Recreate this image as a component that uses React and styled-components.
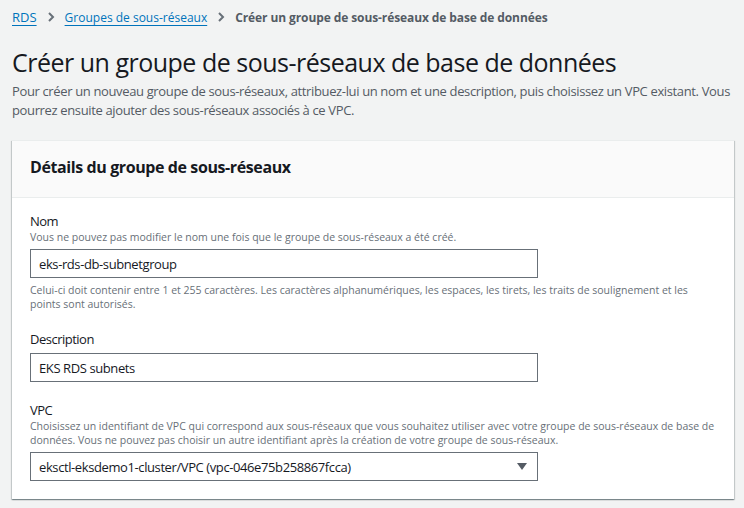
import React from "react";
import styled, { createGlobalStyle } from "styled-components";

const Global = createGlobalStyle`
  html, body { margin: 0; padding: 0; background: #f2f3f3; }
  body { font-family: "Open Sans", "Noto Sans", sans-serif; color: #16191f; }
  * { box-sizing: border-box; }
`;

const Page = styled.div`
  padding: 8px 11px 0 12px;
  width: 744px;
  height: 508px;
  overflow: hidden;
`;

const Crumbs = styled.nav`
  display: flex;
  align-items: center;
  gap: 8px;
  height: 18px;
  font-size: 12px;
`;

const CrumbLink = styled.a`
  color: #0073bb;
  text-decoration: underline;
  text-underline-offset: 3px;
  font-size: ${(p) => p.$size || 12}px;
`;

const CrumbCurrent = styled.span`
  color: #545b64;
  font-weight: 700;
  letter-spacing: -0.1px;
`;

const Chevron = styled.svg`
  width: 12px;
  height: 12px;
  flex: none;
`;

const Title = styled.h1`
  margin: 18px 0 0;
  font-size: 25px;
  font-weight: 400;
  line-height: 36px;
  color: #16191f;
  letter-spacing: -0.5px;
`;

const Lead = styled.p`
  margin: 2px 0 0;
  font-size: 13px;
  line-height: 19px;
  letter-spacing: -0.36px;
  color: #545b64;
  width: 720px;
`;

const Card = styled.section`
  margin-top: 20px;
  width: 722px;
  background: #fff;
  border-top: 1px solid #eaeded;
  box-shadow: 0 1px 1px 0 rgba(0, 28, 36, 0.3), 1px 1px 1px 0 rgba(0, 28, 36, 0.15), -1px 1px 1px 0 rgba(0, 28, 36, 0.15);
`;

const CardHeader = styled.header`
  background: #fafafa;
  border-bottom: 1px solid #eaeded;
  height: 57px;
  padding: 0 18px 4px;
  display: flex;
  align-items: center;
`;

const CardTitle = styled.h2`
  margin: 0;
  font-size: 16px;
  font-weight: 700;
  letter-spacing: -0.4px;
  color: #16191f;
`;

const CardBody = styled.div`
  padding: 14px 18px 18px;
  display: flex;
  flex-direction: column;
  gap: 19px;
`;

const Field = styled.div`
  display: flex;
  flex-direction: column;
`;

const Label = styled.label`
  font-size: 13px;
  line-height: 18px;
  letter-spacing: -0.5px;
  color: #16191f;
`;

const Hint = styled.div`
  font-size: 10.5px;
  line-height: 14px;
  color: #687078;
  margin-top: ${(p) => p.$top || 0}px;
  margin-bottom: ${(p) => p.$bottom || 0}px;
`;

const Input = styled.div`
  width: 508px;
  height: 29px;
  margin-top: ${(p) => p.$top || 0}px;
  border: 1px solid #687078;
  background: #fff;
  display: flex;
  align-items: center;
  padding: 0 8px;
  font-size: 13px;
  letter-spacing: -0.4px;
  color: #16191f;
  justify-content: space-between;
`;

const Caret = styled.svg`
  width: 10px;
  height: 8px;
  margin-right: 2px;
`;

const ChevronIcon = () => (
  <Chevron viewBox="0 0 12 12">
    <path d="M4 2l4 4-4 4" fill="none" stroke="#687078" strokeWidth="2" />
  </Chevron>
);

export default function App() {
  return (
    <Page>
      <Global />
      <Crumbs>
        <CrumbLink $size={13}>RDS</CrumbLink>
        <ChevronIcon />
        <CrumbLink>Groupes de sous-réseaux</CrumbLink>
        <ChevronIcon />
        <CrumbCurrent>Créer un groupe de sous-réseaux de base de données</CrumbCurrent>
      </Crumbs>
      <Title>Créer un groupe de sous-réseaux de base de données</Title>
      <Lead>
        Pour créer un nouveau groupe de sous-réseaux, attribuez-lui un nom et une description, puis choisissez un VPC existant. Vous pourrez ensuite ajouter des sous-réseaux associés à ce VPC.
      </Lead>
      <Card>
        <CardHeader>
          <CardTitle>Détails du groupe de sous-réseaux</CardTitle>
        </CardHeader>
        <CardBody>
          <Field>
            <Label>Nom</Label>
            <Hint $bottom={5}>Vous ne pouvez pas modifier le nom une fois que le groupe de sous-réseaux a été créé.</Hint>
            <Input>eks-rds-db-subnetgroup</Input>
            <Hint $top={5}>
              Celui-ci doit contenir entre 1 et 255 caractères. Les caractères alphanumériques, les espaces, les tirets, les traits de soulignement et les points sont autorisés.
            </Hint>
          </Field>
          <Field>
            <Label>Description</Label>
            <Input $top={5}>EKS RDS subnets</Input>
          </Field>
          <Field>
            <Label>VPC</Label>
            <Hint $bottom={5}>
              Choisissez un identifiant de VPC qui correspond aux sous-réseaux que vous souhaitez utiliser avec votre groupe de sous-réseaux de base de données. Vous ne pouvez pas choisir un autre identifiant après la création de votre groupe de sous-réseaux.
            </Hint>
            <Input>
              <span>eksctl-eksdemo1-cluster/VPC (vpc-046e75b258867fcca)</span>
              <Caret viewBox="0 0 10 8">
                <path d="M0 0h10L5 7z" fill="#545b64" />
              </Caret>
            </Input>
          </Field>
        </CardBody>
      </Card>
    </Page>
  );
}
